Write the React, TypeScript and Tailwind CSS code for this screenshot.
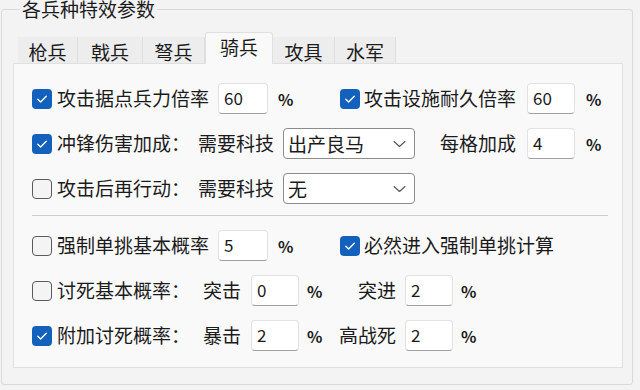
import React from "react";

type Tab = { name: string; w: string; active?: boolean };

const tabs: Tab[] = [
  { name: "枪兵", w: "w-[60px]" },
  { name: "戟兵", w: "w-[65px]" },
  { name: "弩兵", w: "w-[62px]" },
  { name: "骑兵", w: "w-[68px]", active: true },
  { name: "攻具", w: "w-[62px]" },
  { name: "水军", w: "w-[61px]" },
];

function Check({ on }: { on: boolean }) {
  if (on) {
    return (
      <span className="flex h-[20px] w-[20px] shrink-0 items-center justify-center rounded-[4px] bg-[#1461bd]">
        <svg width="12" height="10" viewBox="0 0 12 10">
          <path d="M1.8 5.3 L4.6 8 L10.3 2.2" fill="none" stroke="white" strokeWidth="1.3" strokeLinecap="round" strokeLinejoin="round" />
        </svg>
      </span>
    );
  }
  return <span className="h-[20px] w-[20px] shrink-0 rounded-[4px] border border-[#5a5a5a] bg-[#f4f4f4]" />;
}

function Field({ v, w }: { v: string; w: string }) {
  return (
    <div className={`${w} flex h-[31px] shrink-0 items-center rounded-[4px] border border-[#e2e2e2] border-b-[#a0a0a0] bg-white pb-[2px] pl-[5px] text-[17px] leading-none`}>
      {v}
    </div>
  );
}

function Select({ v }: { v: string }) {
  return (
    <div className="flex h-[31px] w-[132px] shrink-0 items-center justify-between rounded-[4px] border border-[#8c8c8c] bg-white pl-[4px] pr-[8px] leading-none">
      <span>{v}</span>
      <svg width="13" height="8" viewBox="0 0 13 8">
        <path d="M1 1.5 L6.5 6.5 L12 1.5" fill="none" stroke="#555" strokeWidth="1.1" strokeLinecap="round" strokeLinejoin="round" />
      </svg>
    </div>
  );
}

function Pct({ cls }: { cls: string }) {
  return <span className={`${cls} shrink-0 text-[16px] font-bold leading-none`}>%</span>;
}

export default function App() {
  return (
    <div className="h-[390px] w-[640px] overflow-hidden bg-[#f3f3f3] font-['Noto_Sans_CJK_SC','Noto_Sans',sans-serif] text-[19px] text-[#1b1b1b]">
      <fieldset className="ml-[1px] h-[385px] w-[632px] rounded-[3px] border border-[#d9d9d9] pb-0 pl-[11px] pr-0 pt-0">
        <legend className="ml-[7px] px-[2px] leading-[18px]">各兵种特效参数</legend>

        {/* Tabs */}
        <div className="mt-[14px] flex h-[31px] items-end pl-[5px]">
          {tabs.map((t) =>
            t.active ? (
              <div
                key={t.name}
                className={`${t.w} relative z-10 -mb-px flex h-[32px] items-center justify-center rounded-t-[3px] border-x border-t border-[#e0e0e0] bg-[#f9f9f9] pb-[2px]`}
              >
                {t.name}
              </div>
            ) : (
              <div
                key={t.name}
                className={`${t.w} flex h-[26px] items-center justify-center border-r border-[#dedede] bg-[#ededed] pt-[2px] leading-none`}
              >
                {t.name}
              </div>
            )
          )}
        </div>

        {/* Panel */}
        <div className="h-[305px] w-[610px] border border-[#e0e0e0] bg-[#f9f9f9] pl-[18px] pt-[12px]">
          <div className="flex h-[45px] items-center">
            <Check on />
            <span className="ml-[5px] w-[161px] shrink-0">攻击据点兵力倍率</span>
            <Field v="60" w="w-[50px]" />
            <Pct cls="ml-[10px] w-[62px]" />
            <Check on />
            <span className="ml-[4px] w-[163px] shrink-0">攻击设施耐久倍率</span>
            <Field v="60" w="w-[48px]" />
            <Pct cls="ml-[11px]" />
          </div>

          <div className="flex h-[45px] items-center">
            <Check on />
            <span className="ml-[5px] w-[141px] shrink-0">冲锋伤害加成：</span>
            <span className="w-[85px] shrink-0">需要科技</span>
            <Select v="出产良马" />
            <span className="ml-[25px] w-[87px] shrink-0">每格加成</span>
            <Field v="4" w="w-[48px]" />
            <Pct cls="ml-[11px]" />
          </div>

          <div className="flex h-[45px] items-center">
            <Check on={false} />
            <span className="ml-[5px] w-[141px] shrink-0">攻击后再行动：</span>
            <span className="w-[85px] shrink-0">需要科技</span>
            <Select v="无" />
          </div>

          <div className="mt-[4px] h-px w-[576px] bg-[#cdcdcd]" />

          <div className="mt-[7px] flex h-[45px] items-center">
            <Check on={false} />
            <span className="ml-[5px] w-[161px] shrink-0">强制单挑基本概率</span>
            <Field v="5" w="w-[50px]" />
            <Pct cls="ml-[10px] w-[62px]" />
            <Check on />
            <span className="ml-[4px] shrink-0">必然进入强制单挑计算</span>
          </div>

          <div className="flex h-[45px] items-center">
            <Check on={false} />
            <span className="ml-[5px] w-[146px] shrink-0">讨死基本概率：</span>
            <span className="w-[48px] shrink-0">突击</span>
            <Field v="0" w="w-[48px]" />
            <Pct cls="ml-[8px] w-[30px]" />
            <span className="w-[68px] shrink-0 pr-[9px] text-right">突进</span>
            <Field v="2" w="w-[48px]" />
            <Pct cls="ml-[8px]" />
          </div>

          <div className="flex h-[45px] items-center">
            <Check on />
            <span className="ml-[5px] w-[146px] shrink-0">附加讨死概率：</span>
            <span className="w-[48px] shrink-0">暴击</span>
            <Field v="2" w="w-[48px]" />
            <Pct cls="ml-[8px] w-[30px]" />
            <span className="w-[68px] shrink-0 pr-[9px] text-right">高战死</span>
            <Field v="2" w="w-[48px]" />
            <Pct cls="ml-[8px]" />
          </div>
        </div>
      </fieldset>
    </div>
  );
}
